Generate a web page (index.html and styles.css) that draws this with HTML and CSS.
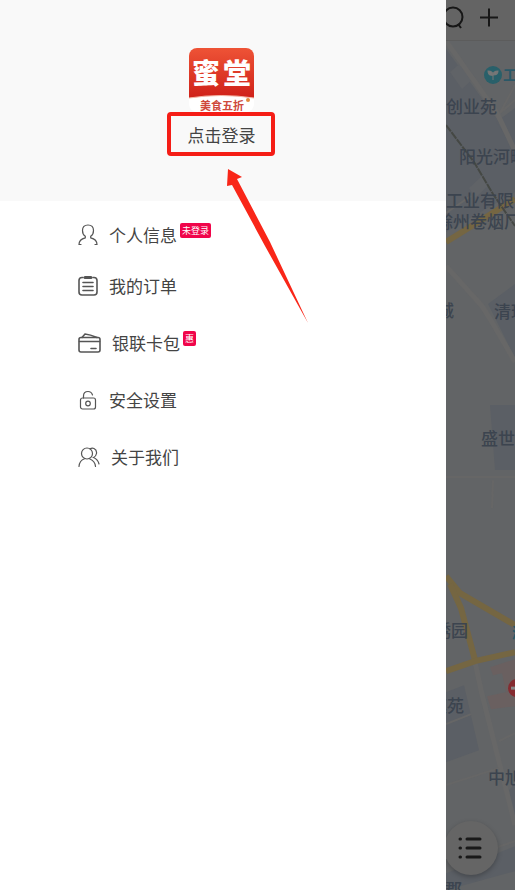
FILE: index.html
```html
<!DOCTYPE html>
<html lang="zh-CN">
<head>
    <meta charset="utf-8">
    <meta name="viewport" content="width=device-width, initial-scale=1">
    <title>蜜堂</title>
    <link rel="stylesheet" href="styles.css">
</head>
<body>

    <div class="app">

        <aside class="drawer">
            <div class="profile">
                <svg class="logo" viewBox="0 0 65 64" role="img" aria-label="蜜堂">
                    <defs>
                        <linearGradient id="logoRed" x1="0" y1="0" x2="0" y2="1">
                            <stop offset="0" stop-color="#ee5336"/>
                            <stop offset="1" stop-color="#cf2119"/>
                        </linearGradient>
                        <clipPath id="logoShape"><rect width="65" height="64" rx="8"/></clipPath>
                    </defs>
                    <g clip-path="url(#logoShape)">
                        <rect width="65" height="64" fill="#fff"/>
                        <path d="M0 0H65V50Q32 45 0 50Z" fill="url(#logoRed)"/>
                        <path d="M0 50Q32 45 65 50" fill="none" stroke="#f4b9a8"/>
                        <circle cx="59" cy="52" r="2" fill="#e38a3c"/>
                        <text class="logo-name" x="3" y="36">蜜</text>
                        <text class="logo-name" x="34" y="36">堂</text>
                        <text class="logo-slogan" x="11" y="62">美食五折</text>
                    </g>
                </svg>
                <button class="login-btn" type="button">点击登录</button>
            </div>

            <ul class="menu">
                <li><a class="menu-link" href="#">
                    <svg class="icon" width="20" height="22" viewBox="0 0 20 22">
                        <path d="M10 1C6.500 1 4.500 3.400 4.500 6.500C4.500 9 5.600 11.200 7.300 12.300V13.800C3.500 14.700 1 16.800 1 20.500H3M10 1C13.500 1 15.500 3.400 15.500 6.500C15.500 9 14.400 11.200 12.700 12.300V13.800C16.500 14.700 19 16.800 19 20.500H17"/>
                    </svg>
                    <span>个人信息</span><em class="badge">未登录</em>
                </a></li>
                <li><a class="menu-link" href="#">
                    <svg class="icon icon-bold" width="20" height="20" viewBox="0 0 20 20">
                        <path d="M5 1.500H4Q1 1.500 1 4.500V16Q1 19 4 19H16Q19 19 19 16V4.500Q19 1.500 16 1.500H15M5 6.500H15M5 10.500H15M5 14.500H15"/>
                        <path d="M7 1.500H13" stroke-width="3"/>
                    </svg>
                    <span>我的订单</span>
                </a></li>
                <li><a class="menu-link" href="#">
                    <svg class="icon icon-bold" width="23" height="20" viewBox="0 0 23 20">
                        <rect x="1" y="4.500" width="21" height="14.500" rx="2"/>
                        <path d="M1.500 8.500H21.500M13 15.500H18M4 4.500L7 1Q12 1.500 19 4.500"/>
                    </svg>
                    <span>银联卡包</span><em class="badge">惠</em>
                </a></li>
                <li><a class="menu-link" href="#">
                    <svg class="icon" width="20" height="20" viewBox="0 0 20 20">
                        <rect x="2.500" y="8" width="15" height="11" rx="2"/>
                        <path d="M5.500 8V6Q5.500 1.500 10 1.500Q13.500 1.500 14.500 5"/>
                        <circle cx="10" cy="13.500" r="2.300"/>
                    </svg>
                    <span>安全设置</span>
                </a></li>
                <li><a class="menu-link" href="#">
                    <svg class="icon" width="22" height="20" viewBox="0 0 22 20">
                        <circle cx="9" cy="6.500" r="5.500"/>
                        <path d="M1 19.500Q1.500 13.500 6.500 11.800M11.500 11.800Q17 14 17.500 19.500M12 1.800Q14 .800 16 1.500Q19 3 18.500 6.500Q18 9.500 15.500 10.500Q20 12.500 21 17"/>
                    </svg>
                    <span>关于我们</span>
                </a></li>
            </ul>

            <svg class="arrow" width="82" height="156" viewBox="0 0 82 156" aria-hidden="true">
                <path d="M1 1L15 9L10 11L43 74L81 155L38 78L5 17L0 18Z" fill="#f92618"/>
            </svg>
        </aside>

        <main class="map-page">
            <header class="topbar">
                <button class="top-btn" type="button" aria-label="搜索">
                    <svg width="22" height="24" viewBox="0 0 22 24">
                        <circle cx="11" cy="12" r="9.500"/>
                        <path d="M16 19L19 23"/>
                    </svg>
                </button>
                <button class="top-btn" type="button" aria-label="添加">
                    <svg width="20" height="20" viewBox="0 0 20 20"><path d="M1 10.500H19M10 1.500V19.500"/></svg>
                </button>
            </header>

            <div class="map">
                <svg class="map-canvas" viewBox="446 41 69 849" preserveAspectRatio="xMinYMin slice">
                    <!-- districts -->
                    <g fill="#5b5f65">
                        <path d="M446 49L497 119L515 152V192L446 232Z"/>
                        <path d="M496 122L515 108V148Z"/>
                        <path d="M488 304L515 284V358Z"/>
                        <path d="M490 405H515V470H495Z"/>
                        <path d="M446 692L464 685L479 750L446 762Z"/>
                        <path d="M446 873L515 846V871L446 890Z"/>
                        <path d="M509 790L515 783V820Z"/>
                    </g>
                    <path d="M450 72L463 61L475 77L462 89Z" fill="#606367"/>
                    <path d="M469 188L482 176L488 186L475 198Z" fill="#606367"/>
                    <g fill="#6a6060">
                        <path d="M490 667L515 659V690L506 692L502 673L493 675Z"/>
                        <path d="M487 696L515 690V706L491 709Z"/>
                    </g>

                    <!-- side roads -->
                    <g class="road">
                        <path d="M446 41L497 113L515 151"/>
                        <path d="M446 266L482 306L492 322L515 362"/>
                        <path d="M475 662L481 690L515 825"/>
                    </g>
                    <g class="lane">
                        <path d="M515 85L500 113L515 100"/>
                        <path d="M446 213L471 196"/>
                        <path d="M446 477H515"/>
                        <path d="M493 480L492 508"/>
                        <path d="M446 785L499 768M499 741L515 733"/>
                        <path d="M446 724L471 714M497 847L515 841"/>
                    </g>

                    <!-- main roads -->
                    <g class="main-road">
                        <path d="M446 242L515 199"/>
                        <path d="M446 576L460 593L515 625"/>
                        <path d="M450 584L461 608L475 660"/>
                        <path d="M446 671L475 661L515 652"/>
                    </g>

                    <path class="rail" d="M446 125L474 162L493 194L515 226"/>

                    <g class="place">
                        <text x="446" y="113">创业苑</text>
                        <text x="459" y="163">阳光河畔</text>
                        <text x="446" y="207">工业有限责</text>
                        <text x="436" y="228">滁州卷烟厂</text>
                        <text x="437" y="317">城</text>
                        <text x="494" y="318">清琅</text>
                        <text x="481" y="445">盛世</text>
                        <text x="434" y="637">绣园</text>
                        <text x="430" y="712">庭苑</text>
                        <text x="488" y="784">中旭</text>
                        <text x="445" y="896">郡</text>
                    </g>

                    <circle cx="493" cy="75" r="9" fill="#29606a"/>
                    <path d="M493 80V75M493 75Q488 76 488 71Q493 71 493 75ZM493 75Q498 75 498 71Q493 71 493 75Z" fill="#777" stroke="#777"/>
                    <text class="poi" x="503" y="80">工</text>
                    <text class="poi" x="512" y="638">滁</text>

                    <circle cx="517" cy="688" r="9" fill="#852b30"/>
                    <path d="M511 688H515" stroke="#888" stroke-width="3"/>
                </svg>

                <button class="list-btn" type="button" aria-label="列表">
                    <svg width="24" height="22" viewBox="0 0 24 22">
                        <path d="M2 2H2.500M2 11H2.500M2 20H2.500M9 2H22M9 11H22M9 20H22"/>
                    </svg>
                </button>
            </div>
        </main>

    </div>

</body>
</html>
```
FILE: styles.css
```css
* {
    box-sizing: border-box;
}

body {
    margin: 0;
    font-family: "Noto Sans CJK SC", sans-serif;
    color: #444;
    background-color: #fff;
}

button {
    padding: 0;
    border: none;
    background: none;
    font-family: inherit;
    cursor: pointer;
}

.app {
    display: flex;
    min-height: 100vh;
    overflow: hidden;
}

/* drawer */
.drawer {
    position: relative;
    z-index: 1;
    flex: none;
    width: 86.6%;
    background-color: #fff;
}

.profile {
    display: flex;
    flex-direction: column;
    align-items: center;
    padding: 48px 3px 45px 0;
    background-color: #f9f9f9;
}

.logo {
    width: 65px;
    height: 64px;
}

.logo-name {
    font-size: 28px;
    font-weight: 900;
    fill: #fff;
}

.logo-slogan {
    font-size: 11px;
    font-weight: 700;
    fill: #cf4a3c;
}

.login-btn {
    width: 108px;
    height: 44px;
    padding-top: 2px;
    border: 4px solid #f51d16;
    border-radius: 4px;
    font-size: 17px;
    line-height: 24px;
    color: #444;
}

.menu {
    margin: 0;
    padding: 11px 0 0 78px;
    list-style: none;
}

.menu-link {
    display: flex;
    align-items: center;
    height: 57px;
    font-size: 17px;
    line-height: 24px;
    color: #444;
    text-decoration: none;
}

.menu li:first-child .menu-link {
    height: 45px;
}

.icon {
    flex: none;
    margin-right: 11px;
    fill: none;
    stroke: #555;
    stroke-width: 1.2;
    stroke-linecap: round;
}

.icon-bold {
    stroke-width: 1.6;
}

.badge {
    margin: 0 0 8px 3px;
    padding: 0 2px;
    border-radius: 2px;
    background-color: #f0054a;
    font-size: 9px;
    font-style: normal;
    line-height: 15px;
    color: #fff;
}

.arrow {
    position: absolute;
    top: 168px;
    left: 227px;
}

/* dimmed map page */
.map-page {
    display: flex;
    flex: 1;
    flex-direction: column;
    min-width: 0;
    background-color: #626466;
}

.topbar {
    display: flex;
    align-items: center;
    justify-content: flex-end;
    gap: 15px;
    height: 41px;
    padding: 0 16px 6px 0;
    border-bottom: 1px solid #5c5c5c;
    background-color: #646464;
}

.top-btn {
    flex: none;
    display: flex;
}

.top-btn svg {
    fill: none;
    stroke: #171717;
    stroke-width: 2;
}

.map {
    position: relative;
    flex: 1;
    overflow: hidden;
}

.map-canvas {
    position: absolute;
    width: 100%;
    height: 100%;
}

.road,
.lane,
.main-road,
.rail {
    fill: none;
}

.road {
    stroke: #676767;
    stroke-width: 5;
}

.lane {
    stroke: #666;
    stroke-width: 2;
}

.main-road {
    stroke: #756642;
    stroke-width: 6;
}

.rail {
    stroke: #454844;
    stroke-width: 2;
    stroke-dasharray: 8 1;
}

.place {
    font-size: 17px;
    font-weight: 500;
    fill: #3c444f;
}

.poi {
    font-size: 14px;
    font-weight: 700;
    fill: #2a5867;
}

.list-btn {
    position: absolute;
    right: 17px;
    bottom: 15px;
    display: flex;
    align-items: center;
    justify-content: center;
    width: 54px;
    height: 54px;
    padding-right: 3px;
    border-radius: 50%;
    background-color: #656565;
    box-shadow: 0 2px 5px rgba(0, 0, 0, 0.25);
}

.list-btn svg {
    fill: none;
    stroke: #191919;
    stroke-width: 3;
    stroke-linecap: round;
}
```
